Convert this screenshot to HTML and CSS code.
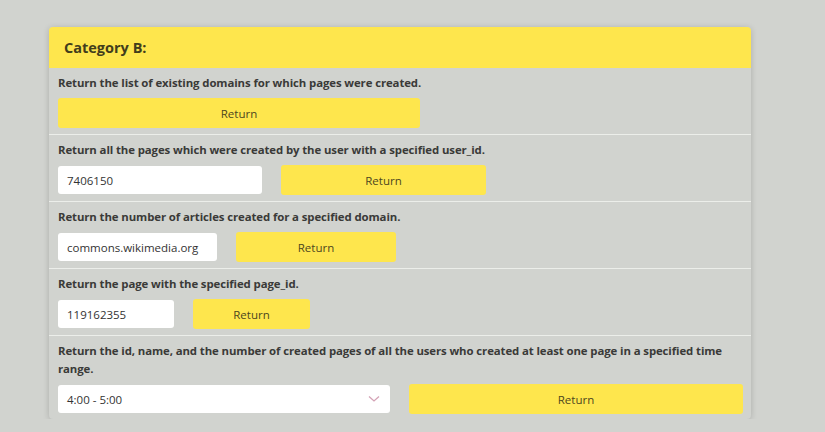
FILE: index.html
```html
<!DOCTYPE html>
<html>
<head>
<meta charset="utf-8">
<link rel="stylesheet" href="styles.css">
</head>
<body>
<div class="card">
  <div class="card-header">Category B:</div>
  <div class="section">
    <div class="label">Return the list of existing domains for which pages were created.</div>
    <div class="row">
      <button class="btn w362">Return</button>
    </div>
  </div>
  <div class="section">
    <div class="label">Return all the pages which were created by the user with a specified user_id.</div>
    <div class="row">
      <div class="input w204">7406150</div>
      <button class="btn w205">Return</button>
    </div>
  </div>
  <div class="section">
    <div class="label">Return the number of articles created for a specified domain.</div>
    <div class="row">
      <div class="input w159">commons.wikimedia.org</div>
      <button class="btn w160">Return</button>
    </div>
  </div>
  <div class="section">
    <div class="label">Return the page with the specified page_id.</div>
    <div class="row">
      <div class="input w116">119162355</div>
      <button class="btn w117">Return</button>
    </div>
  </div>
  <div class="section last">
    <div class="label">Return the id, name, and the number of created pages of all the users who created at least one page in a specified time range.</div>
    <div class="row">
      <div class="input select w332">4:00 - 5:00
        <svg class="chev" width="12" height="8" viewBox="0 0 12 8"><path d="M1 1.5 L6 6 L11 1.5" fill="none" stroke="#d4a3b6" stroke-width="1.3"/></svg>
      </div>
      <button class="btn w334">Return</button>
    </div>
  </div>
</div>
</body>
</html>
```
FILE: styles.css
```css
html, body {
  margin: 0;
  padding: 0;
  background: #d1d3cf;
  font-family: "Open Sans", "Liberation Sans", sans-serif;
}
body {
  padding: 27px 0 0 49px;
}
.card {
  width: 702px;
  background: #d1d3cf;
  border-radius: 4px;
  box-shadow: 0 1px 6px rgba(0,0,0,0.18);
}
.card-header {
  height: 41px;
  background: #fee64d;
  border-radius: 4px 4px 0 0;
  box-sizing: border-box;
  padding-left: 15px;
  display: flex;
  align-items: center;
  font-weight: 700;
  font-size: 14.5px;
  color: #423d1c;
}
.section {
  padding: 6px 8px 6px 9px;
  border-bottom: 1px solid #eceeea;
}
.section.last {
  border-bottom: none;
  padding-bottom: 5px;
}
.label {
  font-weight: 700;
  font-size: 11.4px;
  line-height: 18px;
  color: #3a3a38;
  margin-bottom: 6px;
  letter-spacing: -0.1px;
}
.row {
  display: flex;
  gap: 19px;
  align-items: center;
}
.btn {
  height: 30px;
  border: none;
  border-radius: 3px;
  background: #fee64d;
  color: #4d4720;
  font-family: "Open Sans", "Liberation Sans", sans-serif;
  font-size: 11.5px;
  padding: 0;
}
.input {
  height: 28px;
  box-sizing: border-box;
  background: #fff;
  border-radius: 3px;
  padding-left: 9px;
  display: flex;
  align-items: center;
  font-size: 11.5px;
  color: #333;
}
.select {
  position: relative;
}
.chev {
  position: absolute;
  right: 10px;
  top: 10px;
}
.w362 { width: 362px; }
.w204 { width: 204px; }
.w205 { width: 205px; }
.w159 { width: 159px; }
.w160 { width: 160px; }
.w116 { width: 116px; }
.w117 { width: 117px; }
.w332 { width: 332px; }
.w334 { width: 334px; }
```
